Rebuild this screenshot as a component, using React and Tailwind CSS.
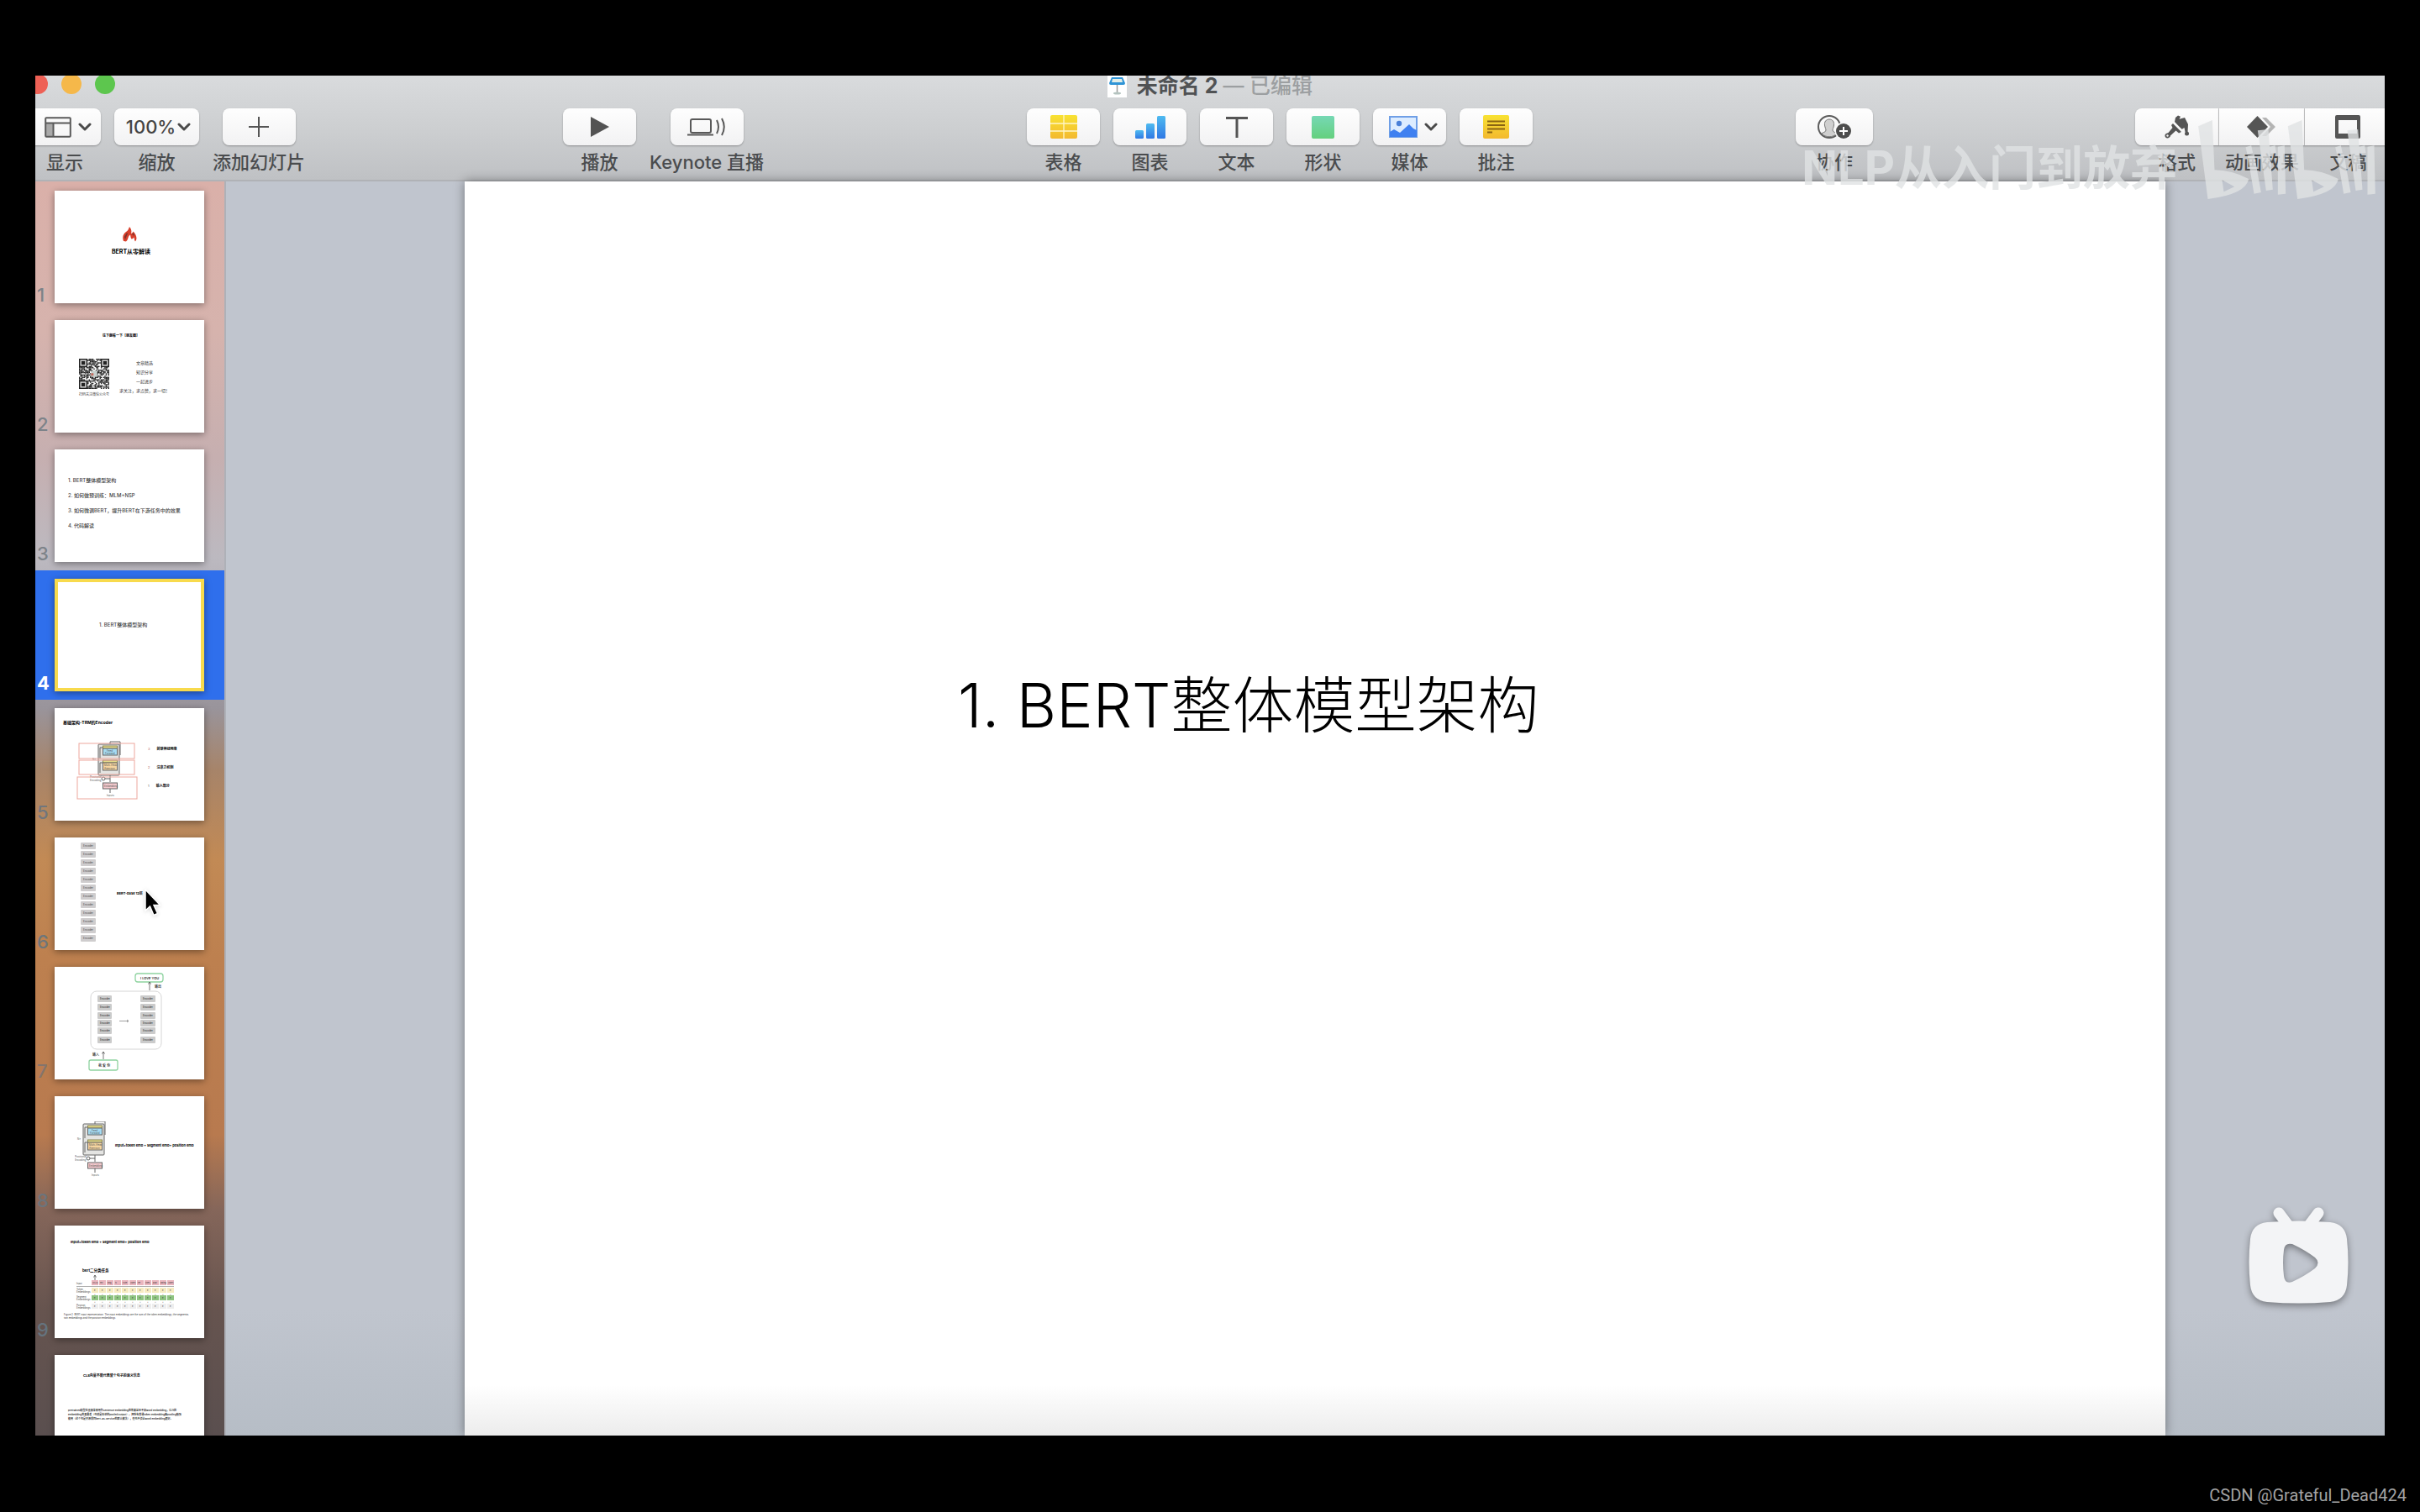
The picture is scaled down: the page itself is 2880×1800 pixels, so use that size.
import React from 'react';

function Chevron() {
  return (
    <svg viewBox="0 0 16 12" className="h-3 w-4" fill="none" stroke="#4a4a4a" strokeWidth="3" strokeLinecap="round" strokeLinejoin="round">
      <path d="M2 3l6 6 6-6" />
    </svg>
  );
}

function ViewIcon() {
  return (
    <svg viewBox="0 0 32 25" className="h-[25px] w-8" fill="none" stroke="#5a5a5a" strokeWidth="2">
      <rect x="1.5" y="8" width="9" height="15" fill="#a9a9a9" stroke="none" />
      <rect x="1.2" y="1.2" width="29.6" height="22.6" rx="1" />
      <path d="M1 7.5h30M10.5 7.5v16" />
    </svg>
  );
}

function PlusIcon() {
  return (
    <svg viewBox="0 0 24 24" className="h-6 w-6" stroke="#555" strokeWidth="2">
      <path d="M12 0v24M0 12h24" />
    </svg>
  );
}

function PlayIcon() {
  return (
    <svg viewBox="0 0 22 24" className="h-6 w-[22px]" fill="#535353">
      <path d="M0 0l22 12L0 24z" />
    </svg>
  );
}

function LiveIcon() {
  return (
    <svg viewBox="0 0 46 22" className="h-[22px] w-[46px]" fill="none" stroke="#595959" strokeWidth="2">
      <rect x="4" y="2" width="24" height="16" rx="2" />
      <path d="M0 20.5h31" />
      <path d="M35 3q4 8 0 16M41 1q5.5 10 0 20" />
    </svg>
  );
}

function TableIcon() {
  return (
    <svg viewBox="0 0 32 28" className="h-7 w-8">
      <defs>
        <linearGradient id="yellow" x2="0" y2="1">
          <stop stopColor="#f8e233" />
          <stop offset="1" stopColor="#f3b92f" />
        </linearGradient>
      </defs>
      <rect width="32" height="28" rx="2" fill="url(#yellow)" />
      <path d="M0 10h32M0 19h32M16 0v28" stroke="#fff6c8" strokeWidth="1.3" />
    </svg>
  );
}

function ChartIcon() {
  return (
    <svg viewBox="0 0 36 27" className="h-[27px] w-9">
      <defs>
        <linearGradient id="chart" x2="0" y2="1">
          <stop stopColor="#4fbbf0" />
          <stop offset="1" stopColor="#2f78e4" />
        </linearGradient>
      </defs>
      <g fill="url(#chart)">
        <rect y="17" width="10" height="10" rx="1.5" />
        <rect x="13" y="9" width="10" height="18" rx="1.5" />
        <rect x="26" width="10" height="27" rx="1.5" />
      </g>
    </svg>
  );
}

function TextIcon() {
  return (
    <svg viewBox="0 0 26 26" className="h-[26px] w-[26px]" stroke="#555" strokeWidth="3">
      <path d="M0 2.5h26M13 2v24" />
    </svg>
  );
}

function ShapeIcon() {
  return <span className="h-[27px] w-[27px] rounded-xs bg-linear-to-b from-[#76d8b4] to-[#64d07d]" />;
}

function MediaIcon() {
  return (
    <svg viewBox="0 0 34 26" className="h-[26px] w-[34px]">
      <rect x="1" y="1" width="32" height="24" fill="#dcecff" stroke="#6f9fe6" strokeWidth="2" />
      <circle cx="12" cy="9" r="3.2" fill="#4a80d8" />
      <path d="M1 25v-6l5-3 7 4 11-10 5 5 4 2v8z" fill="#3f80f0" />
    </svg>
  );
}

function CommentIcon() {
  return (
    <svg viewBox="0 0 31 28" className="h-7 w-[31px]">
      <rect width="31" height="28" rx="2" fill="url(#yellow)" />
      <path d="M5 7.5h21M5 12h21M5 16.5h21M5 20.5h6" stroke="#8a6412" strokeWidth="1.8" />
    </svg>
  );
}

function CollaborateIcon() {
  return (
    <svg viewBox="0 0 42 30" className="h-[30px] w-[42px]">
      <circle cx="15" cy="15" r="13" fill="none" stroke="#5c5c5c" strokeWidth="2" />
      <path d="M15 6c-4 0-6 3-5.5 7 .3 3 1.5 4 1.5 6 0 2.500-4 2.500-5 4 4 5 14 5 18 0-1-1.500-5-1.500-5-4 0-2 1.200-3 1.500-6C21 9 19 6 15 6z" fill="#cfcfcf" stroke="#777" />
      <circle cx="32" cy="20" r="10.5" fill="#fafafa" />
      <circle cx="32" cy="20" r="9" fill="#4d4d4d" />
      <path d="M32 15v10M27 20h10" stroke="#fff" strokeWidth="2" />
    </svg>
  );
}

function FormatIcon() {
  return (
    <svg viewBox="0 0 30 28" className="h-7 w-[30px]" fill="#555">
      <path d="M13 3l3-2.500 3 1.200-1.500 3L24 3l4 8-.5 9h-3l-1-5-3 2L12 8z" />
      <circle cx="26.5" cy="22" r="2.5" />
      <path d="M10 10l10 10-3 1.500-3.500-3-6.500 6c0 3-6 4.500-6.500.5-.3-3 2.500-3.500 4-4l5-6L8 12z" />
      <path d="M10.500 9l11 9.500" stroke="#fafafa" strokeWidth="1.5" />
      <circle cx="3.500" cy="24.500" r="1.200" fill="#eee" />
    </svg>
  );
}

function AnimateIcon() {
  return (
    <svg viewBox="0 0 35 26" className="h-[26px] w-[35px]">
      <path d="M18 2h5l11 11-11 11h-5l10-11z" fill="#b4b4b4" />
      <path d="M12.5 0L25 13 12.5 26 0 13z" fill="#555" />
    </svg>
  );
}

function DocumentIcon() {
  return (
    <svg viewBox="0 0 30 28" className="h-7 w-[30px]">
      <path fillRule="evenodd" fill="#555" d="M2 0h26q2 0 2 2v24q0 2-2 2H2q-2 0-2-2V2q0-2 2-2zM4 6v16h22V6z" />
    </svg>
  );
}

function ToolButton({ label, children, width = 'w-[87px]' }) {
  return (
    <button type="button" className="flex flex-col items-center gap-1">
      <span className={`flex h-11 items-center justify-center gap-2 rounded-lg bg-linear-to-b from-[#fefefe] to-[#f2f2f3] shadow-[0_1px_2px_rgba(0,0,0,0.3)] ${width}`}>
        {children}
      </span>
      <span className="text-[22px] leading-8 font-medium whitespace-nowrap text-[#4a4c4e]">{label}</span>
    </button>
  );
}

function Segment({ label, children, width, rounded = '' }) {
  return (
    <button type="button" className={`flex flex-col items-center gap-1 ${width}`}>
      <span className={`flex h-11 w-full items-center justify-center border-r border-[#cfcfd0] bg-linear-to-b from-[#fefefe] to-[#f2f2f3] shadow-[0_1px_2px_rgba(0,0,0,0.3)] ${rounded}`}>
        {children}
      </span>
      <span className="text-[22px] leading-8 font-medium whitespace-nowrap text-[#4a4c4e]">{label}</span>
    </button>
  );
}

function TitleBar() {
  return (
    <div className="relative flex h-[39px] justify-center">
      <div className="absolute top-[-2px] -left-[9px] flex gap-4">
        <span className="h-6 w-6 rounded-full bg-[#ee6156]" />
        <span className="h-6 w-6 rounded-full bg-[#f5b84a]" />
        <span className="h-6 w-6 rounded-full bg-[#5dc64e]" />
      </div>
      <div className="-mt-1 flex h-8 items-center gap-3 text-[25px] leading-7">
        <svg viewBox="0 0 23 32" className="h-8 w-[23px]">
          <rect width="23" height="30" fill="#fff" />
          <path d="M5 6h13l3 7q0 2-2 2H4q-2 0-2-2z" fill="#2f94d6" />
          <path d="M6 8h11l1 4H5z" fill="#e3eee8" />
          <path d="M11.5 15v9" stroke="#9b9b9b" strokeWidth="1.5" />
          <ellipse cx="11.5" cy="25" rx="4.5" ry="1.5" fill="#b4c3bf" />
        </svg>
        <h1 className="font-bold whitespace-pre text-[#505254]">
          未命名 2 <span className="font-medium text-[#9c9fa1]">— 已编辑</span>
        </h1>
      </div>
    </div>
  );
}

function Toolbar() {
  return (
    <header className="h-[126px] shrink-0 border-b-2 border-[#b0b2b6] bg-linear-to-b from-[#d9dbdd] via-[#cdcfd1] to-[#bfc1c4]">
      <TitleBar />
      <div className="flex">
        <div className="-ml-2 flex gap-4">
          <ToolButton label="显示" width="w-[86px] pl-2">
            <ViewIcon />
            <Chevron />
          </ToolButton>
          <ToolButton label="缩放" width="w-[101px]">
            <span className="flex items-center gap-0.5 pl-1 text-[22px] font-medium text-[#444]">
              100%
              <Chevron />
            </span>
          </ToolButton>
          <ToolButton label="添加幻灯片"><PlusIcon /></ToolButton>
        </div>
        <div className="grow-[308]" />
        <div className="flex gap-4">
          <ToolButton label="播放"><PlayIcon /></ToolButton>
          <ToolButton label="Keynote 直播"><LiveIcon /></ToolButton>
        </div>
        <div className="grow-[314]" />
        <div className="flex gap-4">
          <ToolButton label="表格"><TableIcon /></ToolButton>
          <ToolButton label="图表"><ChartIcon /></ToolButton>
          <ToolButton label="文本"><TextIcon /></ToolButton>
          <ToolButton label="形状"><ShapeIcon /></ToolButton>
          <ToolButton label="媒体" width="w-[87px] pl-2">
            <MediaIcon />
            <Chevron />
          </ToolButton>
          <ToolButton label="批注"><CommentIcon /></ToolButton>
        </div>
        <div className="grow-[314]" />
        <ToolButton label="协作" width="w-[92px]"><CollaborateIcon /></ToolButton>
        <div className="grow-[313]" />
        <div className="-mr-2 flex">
          <Segment label="格式" width="w-[100px]" rounded="rounded-l-lg"><FormatIcon /></Segment>
          <Segment label="动画效果" width="w-[102px]"><AnimateIcon /></Segment>
          <Segment label="文稿" width="w-[103px]"><DocumentIcon /></Segment>
        </div>
      </div>
    </header>
  );
}

function CoverSlide() {
  return (
    <div className="flex flex-col items-center pt-[43px]">
      <svg viewBox="0 0 17 18" className="h-[18px] w-[17px]">
        <path d="M1 17C-1 12 1 8 4 6c2-1 3-3 4-6 2 2 3 5 2 8 1 0 2-1 2.500-2.500C16 9 18 14 15 17.500c-1-1-1-3-1.500-5-1 1-1.500 2-3 2-1-1-1-3-1.500-5C6 11 7 15 4 17.500z" fill="#d8402c" />
        <path d="M2 12l3-5 1 1-3 7zM11 9l2-2 1 4z" fill="#7d332b" />
      </svg>
      <p className="mt-2 pl-1 text-[7px] leading-2 font-bold">BERT从零解读</p>
    </div>
  );
}

// pseudo-random modules with the three finder squares on top
function QrCode() {
  const cells = [];
  for (let y = 0; y < 25; y++) {
    for (let x = 0; x < 25; x++) {
      if ((x * x * 7 + y * y * 13 + x * y * 5 + (x ^ y)) % 11 < 7) cells.push([x, y]);
    }
  }
  return (
    <svg viewBox="0 0 25 25" className="h-9 w-9">
      {cells.map(([x, y]) => (
        <rect key={`${x}-${y}`} x={x} y={y} width="1" height="1" fill="#222" />
      ))}
      {[[0, 0], [18, 0], [0, 18]].map(([x, y]) => (
        <g key={`${x}-${y}`}>
          <rect x={x} y={y} width="7" height="7" fill="#222" />
          <rect x={x + 1} y={y + 1} width="5" height="5" fill="#ddd" />
          <rect x={x + 2} y={y + 2} width="3" height="3" fill="#222" />
        </g>
      ))}
      <rect x="10" y="10" width="5" height="5" fill="#c9d2cf" />
      <rect x="10" y="12" width="2" height="2" fill="#c2695c" />
    </svg>
  );
}

function FollowSlide() {
  return (
    <div className="pt-4 text-[4px] leading-[5px] text-[#333]">
      <p className="pr-5 text-center font-bold text-black">往下翻看一下【朋友圈】</p>
      <div className="mt-[25px] flex gap-3 pl-[29px]">
        <div className="flex flex-col items-center gap-1">
          <QrCode />
          <p>扫码关注微信公众号</p>
        </div>
        <div className="flex flex-col items-center gap-[6px] pt-[3px] text-[5px]">
          <p>文章精选</p>
          <p>知识分享</p>
          <p>一起进步</p>
          <p>求关注，求点赞，求一切！</p>
        </div>
      </div>
    </div>
  );
}

function AgendaSlide() {
  return (
    <div className="flex flex-col gap-[10px] pt-[33px] pl-4 text-[6px] leading-2 font-medium whitespace-nowrap text-[#444]">
      <p>1. BERT整体模型架构</p>
      <p>2. 如何做预训练：MLM+NSP</p>
      <p>3. 如何微调BERT，提升BERT在下游任务中的效果</p>
      <p>4. 代码解读</p>
    </div>
  );
}

function ChapterSlide() {
  return <p className="pt-[51px] pl-[53px] text-[6px] leading-2 font-medium text-[#444]">1. BERT整体模型架构</p>;
}

// transformer encoder block, 44 x 68
function EncoderDrawing() {
  return (
    <g fill="none" stroke="#666" strokeWidth="1">
      <rect x="10" y="3" width="25" height="37" rx="1" fill="#e4e4e2" />
      <path d="M24 3V0h12v16M24 40v8M24 56v5M12 20V7h12M12 37V25h12" />
      <rect x="15.5" y="5" width="17" height="3" fill="#e6dd8c" stroke="#8a8650" />
      <rect x="15.5" y="8" width="17" height="8" fill="#a5dbf2" />
      <rect x="15.5" y="22" width="17" height="3" fill="#e6dd8c" stroke="#8a8650" />
      <rect x="15.5" y="25" width="17" height="9" fill="#f6d5a0" />
      <rect x="15.5" y="49" width="17" height="7" fill="#f3c9cd" />
      <circle cx="16" cy="44" r="2" />
      <path d="M18 44h6" />
      <g fill="#555" stroke="none" fontSize="3">
        <text x="20" y="11.5">Feed</text>
        <text x="18" y="15">Forward</text>
        <text x="17" y="29">Multi-Head</text>
        <text x="17" y="33">Attention</text>
        <text x="17" y="54">Embedding</text>
        <text x="20" y="65">Inputs</text>
        <text x="0" y="43">Positional</text>
        <text x="0" y="46.5">Encoding</text>
        <text x="3" y="22">N×</text>
      </g>
    </g>
  );
}

function EncoderSlide() {
  return (
    <div className="pt-[14px]">
      <p className="pl-[10px] text-[5px] leading-[6px] font-bold whitespace-nowrap">基础架构-TRM的Encoder</p>
      <div className="mt-[18px] flex gap-3 pl-[26px]">
        <svg viewBox="0 0 73 72" className="h-[72px] w-[73px]">
          <g transform="translate(16 2)"><EncoderDrawing /></g>
          <g fill="none" stroke="#eda79d" strokeWidth="1">
            <rect x="3" y="4" width="66" height="18" />
            <rect x="3" y="24" width="66" height="17" />
            <rect x="1" y="44" width="71" height="26" />
          </g>
        </svg>
        <ol className="flex flex-col gap-4 pt-2 text-[4px] leading-[6px] font-bold">
          <li><span className="mr-2 font-normal text-[#b06060]">3</span>前馈神经网络</li>
          <li><span className="mr-2 font-normal text-[#b06060]">2</span>注意力机制</li>
          <li><span className="mr-2 font-normal text-[#555]">1</span>输入部分</li>
        </ol>
      </div>
    </div>
  );
}

function EncoderBox() {
  return <span className="flex h-2 w-[18px] items-center justify-center rounded-[1px] bg-[#cfcdce] text-[3px] leading-none text-[#444]">Encoder</span>;
}

function StackSlide() {
  return (
    <div className="flex items-center pt-1.5 pl-[31px]">
      <div className="flex flex-col gap-[2px]">
        {Array.from({ length: 12 }, (_, i) => <EncoderBox key={i} />)}
      </div>
      <p className="pt-1 pl-[25px] text-[4px] leading-[6px] font-bold">BERT-base 12层</p>
    </div>
  );
}

function FlowSlide() {
  return (
    <svg viewBox="0 0 178 134" className="h-full w-full text-[4px]" fontWeight="500">
      <rect x="43" y="29" width="84" height="69" rx="7" fill="none" stroke="#d6d6d6" />
      <g fill="none" stroke="#8fd3a0" strokeWidth="1.3">
        <rect x="96" y="8" width="33" height="10" rx="3" />
        <rect x="41" y="111" width="34" height="12" rx="2" />
      </g>
      {[34, 44, 54, 63, 72, 83].map((y) => (
        <g key={y} fontSize="3" fill="#333">
          <rect x="51" y={y} width="17" height="8" rx="1" fill="#cbcbcb" />
          <rect x="102" y={y} width="18" height="8" rx="1" fill="#cbcbcb" />
          <text x="54" y={y + 5}>Encoder</text>
          <text x="105" y={y + 5}>Encoder</text>
        </g>
      ))}
      <path d="M113 28V18m-1.500 2.500L113 18l1.500 2.500M58 110v-9m-1.500 2.500L58 101l1.500 2.500" fill="none" stroke="#555" strokeWidth=".8" />
      <path d="M77 64.500h11m-2-1.500l2 1.500-2 1.500" fill="none" stroke="#888" strokeWidth=".8" />
      <text x="102" y="14.5">I LOVE YOU</text>
      <text x="119" y="25">输出</text>
      <text x="45" y="106">输入</text>
      <text x="52" y="118.5">我 爱 你</text>
    </svg>
  );
}

function InputSlide() {
  return (
    <div className="flex pt-[30px] pl-[24px]">
      <svg viewBox="0 0 44 68" className="h-[68px] w-[44px] shrink-0"><EncoderDrawing /></svg>
      <p className="pt-[26px] pl-1 text-[4px] leading-[6px] font-bold whitespace-nowrap">Input=token emb + segment emb+ position emb</p>
    </div>
  );
}

const tokens = ['[CLS]', 'my', 'dog', 'is', 'cute', '[SEP]', 'he', 'likes', 'play', '##ing', '[SEP]'];

function EmbeddingSlide() {
  return (
    <div className="pt-[17px]">
      <p className="pl-[19px] text-[4px] leading-[6px] font-bold whitespace-nowrap">Input=token emb + segment emb+ position emb</p>
      <svg viewBox="0 0 150 64" className="mt-[26px] ml-[10px] h-[64px] w-[150px]">
        <g fontSize="4.5" fontWeight="700"><text x="23" y="6">bert二分类任务</text></g>
        <path d="M38 16v-6m-1.500 2.500L38 10l1.500 2.500" fill="none" stroke="#555" strokeWidth=".8" />
        <g fontSize="2.8" fill="#444">
          <text x="16" y="21">Input</text>
          <text x="16" y="28">Token</text>
          <text x="16" y="31">Embeddings</text>
          <text x="16" y="37">Segment</text>
          <text x="16" y="40">Embeddings</text>
          <text x="16" y="47">Position</text>
          <text x="16" y="50">Embeddings</text>
        </g>
        {tokens.map((t, i) => (
          <g key={i} fontSize="2.5" fill="#333">
            <rect x={34 + i * 9} y="16" width="8" height="6" fill="#eab5bd" />
            <rect x={34 + i * 9} y="25" width="8" height="6" fill="#f7ebc1" />
            <rect x={34 + i * 9} y="34" width="8" height="6" fill="#8fc481" />
            <rect x={34 + i * 9} y="44" width="8" height="6" fill="#eeeeee" />
            <text x={35 + i * 9} y="20">{t}</text>
            <text x={37 + i * 9} y="29">E</text>
            <text x={37 + i * 9} y="38">E</text>
            <text x={37 + i * 9} y="48">E</text>
            <text x={37 + i * 9} y="33.5">+</text>
            <text x={37 + i * 9} y="43">+</text>
          </g>
        ))}
        <path d="M16 23.500h116" stroke="#8b8b8b" strokeWidth=".7" />
        <g fontSize="2.8" fill="#333">
          <text x="1" y="58">Figure 2: BERT input representation. The input embeddings are the sum of the token embeddings, the segmenta-</text>
          <text x="1" y="62">tion embeddings and the position embeddings.</text>
        </g>
      </svg>
    </div>
  );
}

function ClsSlide() {
  return (
    <div className="pt-[22px] text-[4px]">
      <p className="pl-[34px] leading-[6px] font-bold whitespace-nowrap">CLS向量不能代表整个句子的语义信息</p>
      <div className="mt-[36px] pl-4 text-[3px] leading-[5px] font-medium whitespace-nowrap">
        <p>pretrained模型在直接拿来用作sentence embedding的效果甚至不如word embedding，CLS的</p>
        <p>embedding效果最差（也就是你说的pooled output）。把所有普通token embedding做pooling勉强</p>
        <p>能用（这个也是开源项目bert-as-service的默认做法），但也不会比word embedding更好。</p>
      </div>
    </div>
  );
}

const slides = [
  { Slide: CoverSlide, color: 'text-[#7d8389]' },
  { Slide: FollowSlide, color: 'text-[#7d8389]' },
  { Slide: AgendaSlide, color: 'text-[#7d8389]' },
  { Slide: ChapterSlide, color: 'text-white', selected: true },
  { Slide: EncoderSlide, color: 'text-[#70767e]' },
  { Slide: StackSlide, color: 'text-[#6d767b]' },
  { Slide: FlowSlide, color: 'text-[#84746c]' },
  { Slide: InputSlide, color: 'text-[#6c747c]' },
  { Slide: EmbeddingSlide, color: 'text-[#65747f]' },
  { Slide: ClsSlide, color: 'text-[#65747f]' },
];

function Cursor() {
  return (
    <svg viewBox="0 0 24 36" className="absolute top-[60px] left-[106px] h-9 w-6 drop-shadow-sm">
      <path d="M2 2v25l5.500-5 4.500 10.500 4.500-2-4.500-10h7.500z" fill="#000" stroke="#fff" strokeWidth="1.5" />
    </svg>
  );
}

function Navigator() {
  return (
    <aside className="w-[227px] shrink-0 border-r-2 border-[#aeb1b8] bg-[linear-gradient(to_bottom,#dab0a9_0%,#d6b3ad_12%,#c6afb0_22%,#bcb9c0_30%,#99949b_42%,#a78469_47%,#c28a55_54%,#bd804f_62%,#b87a4f_76%,#85665a_82%,#66544f_90%,#5a4f4f_100%)] pt-px">
      {slides.map(({ Slide, color, selected }, i) => (
        <div key={i} className={`flex h-[154px] items-end gap-2 py-[10px] pl-[2px] ${selected ? 'bg-[#2f6fec]' : ''}`}>
          <span className={`w-[13px] text-[22px] leading-5 ${color} ${selected ? 'font-bold' : 'font-medium'}`}>{i + 1}</span>
          <div className={`relative h-[134px] w-[178px] bg-white text-black shadow-[0_2px_8px_rgba(0,0,0,0.4)] ${selected ? 'outline-4 -outline-offset-4 outline-[#f8da4c]' : ''}`}>
            <Slide />
            {i === 5 && <Cursor />}
          </div>
        </div>
      ))}
    </aside>
  );
}

function TvIcon() {
  return (
    <svg viewBox="0 0 119 115" className="absolute right-[43px] bottom-[157px] h-[115px] w-[119px] drop-shadow-[0_3px_4px_rgba(0,0,0,0.4)]">
      <path d="M36 7l12 16M83 7L71 23" stroke="#f3f4f6" strokeWidth="13" strokeLinecap="round" />
      <path
        fillRule="evenodd"
        fill="#f3f4f6"
        d="M22 18Q60 15 97 18Q115 20 117 38Q120 66 117 93Q115 111 97 113Q60 116 22 113Q4 111 2 93Q-1 66 2 38Q4 20 22 18ZM42 51Q40 66 42 82Q43 92 52 89Q67 82 79 73Q86 66 79 60Q67 51 52 44Q43 42 42 51Z"
      />
    </svg>
  );
}

function LogoHalf() {
  return (
    <g>
      <path fillRule="evenodd" d="M228 92l50-22 8 178q60 0 122 32-10 55-146 72zM313 284l6 42 38-18z" />
      <path d="M397 167l20-6 6 26-20 5zM404 197l24-4 24 135-25 5zM440 107l38-4 16 215-24 4zM482 165l20-4 4 26-20 3zM512 165l24-4 4 172-28 3z" />
    </g>
  );
}

function Watermark() {
  return (
    <div className="absolute top-[53px] right-[11px] flex items-start gap-6 text-[#e0e2e4]/80">
      <p className="pt-[17px] text-[56px] leading-[80px] font-bold whitespace-nowrap">NLP从入门到放弃</p>
      <svg viewBox="225 70 635 285" className="h-[95px] w-[212px]" fill="currentColor">
        <LogoHalf />
        <g transform="translate(320 0)"><LogoHalf /></g>
      </svg>
    </div>
  );
}

export default function App() {
  return (
    <div className="flex h-screen flex-col bg-black pt-[90px] font-['Inter','Noto_Sans_CJK_SC',sans-serif]">
      <div className="relative mx-[42px] flex min-h-0 flex-1 flex-col overflow-hidden">
        <Toolbar />
        <div className="flex min-h-0 flex-1">
          <Navigator />
          <main className="grid flex-1 grid-cols-[284fr_2024fr_261fr] bg-linear-to-b from-[#c0c5ce] from-90% to-[#b6bdc6]">
            <section className="col-start-2 bg-linear-to-b from-white from-96% to-[#ececec] pt-[574px] pl-[29%] shadow-[0_0_12px_rgba(0,0,0,0.4)]">
              <h2 className="text-[73px] leading-[100px] font-light whitespace-nowrap text-black">
                1. BERT整体模型架构
              </h2>
            </section>
          </main>
        </div>
        <Watermark />
        <TvIcon />
      </div>
      <footer className="flex h-[91px] shrink-0 items-end justify-end pr-4 pb-1.5">
        <p className="font-['Roboto',sans-serif] text-[20px] leading-7 text-[#a3a3a3]">CSDN @Grateful_Dead424</p>
      </footer>
    </div>
  );
}
